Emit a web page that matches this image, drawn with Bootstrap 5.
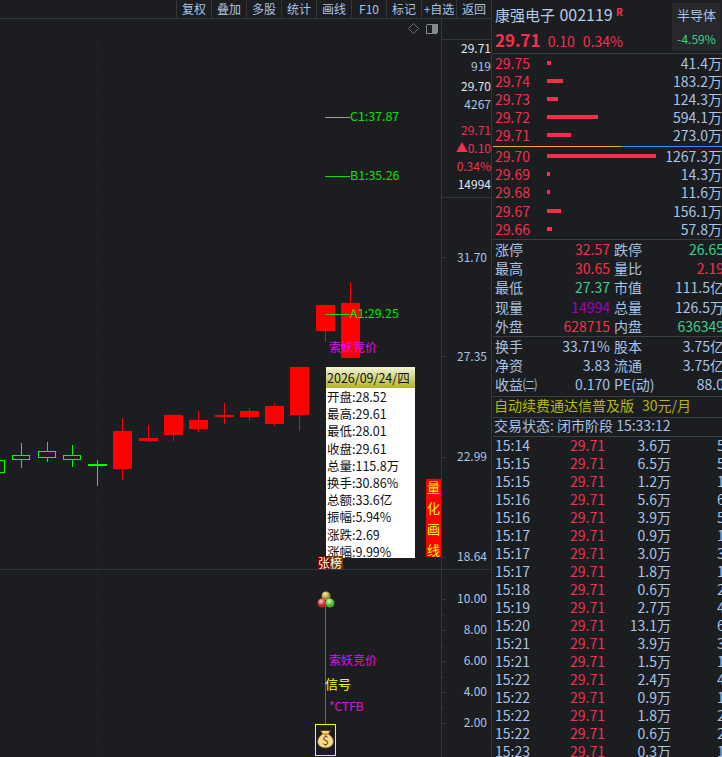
<!DOCTYPE html>
<html lang="zh-CN">

<head>
    <meta charset="UTF-8">
    <title>康强电子 002119</title>
    <link href="https://cdn.jsdelivr.net/npm/bootstrap@5.3.0/dist/css/bootstrap.min.css" rel="stylesheet">
    <style>
        html, body { height: 100%; overflow: hidden; background: #1b1d21; }
        body { font-family: "Noto Sans CJK SC", "Liberation Sans", sans-serif; font-size: 14px; color: #a9c4e4; }
        .app { width: 722px; height: 757px; }
        .chart-side { width: 492px; flex: none; border-right: 1px solid #33363b; }
        .quote-side { width: 230px; flex: none; }

        .toolbar { height: 19px; border-bottom: 1px solid #33363b; position: relative; z-index: 2; }
        .tool-btn { width: 35px; height: 18px; padding: 0; border: 0; border-left: 1px solid #33363b; border-radius: 0; font-size: 12px; line-height: 16px; color: #a9c4e4; background: none; white-space: nowrap; overflow: hidden; }

        .chart-svg { position: absolute; left: 0; top: 0; width: 491px; height: 757px; shape-rendering: crispEdges; }
        .chart-svg text { font-family: "Noto Sans CJK SC", "Liberation Sans", sans-serif; font-size: 12px; shape-rendering: auto; }
        .ax { fill: #a9c4e4; text-anchor: end; }
        .ax-w { fill: #e2e8f0; text-anchor: end; }
        .ax-r { fill: #f5304e; text-anchor: end; }
        .chart-svg .lbl-g { fill: #00e800; font-size: 12.4px; }
        .lbl-m { fill: #e010e8; }
        .chart-svg .lbl-y { fill: #ffff00; font-size: 13px; }

        .kline-tip { position: absolute; left: 326px; top: 367px; width: 89px; height: 191px; background: #fff; color: #111; font-size: 12.5px; overflow: hidden; }
        .kline-tip-head { height: 21px; line-height: 21px; padding-left: 1px; background: linear-gradient(#f4f4d8, #b3b32a); white-space: nowrap; }
        .kline-tip-row { height: 17.2px; line-height: 17.2px; padding-left: 1px; white-space: nowrap; }
        .kline-tip-row:first-of-type { margin-top: 2px; }
        .draw-tag { position: absolute; left: 426px; top: 479px; width: 15px; height: 78px; background: #ff0000; color: #ffff00; font-size: 13px; line-height: 21px; text-align: center; }
        .rank-tag { position: absolute; left: 318px; top: 556px; height: 13px; font-size: 12px; line-height: 13px; color: #fff; z-index: 3; }
        .rank-a { background: #7a0000; width: 12px; overflow: hidden; }
        .rank-b { background: #7a3c00; width: 13px; overflow: hidden; }

        .stock-head { height: 53px; }
        .stock-name { font-size: 15px; line-height: 20px; padding: 2px 0 0 3px; color: #b6cbe6; white-space: nowrap; }
        .stock-code { font-size: 16px; margin-left: 1px; }
        .stock-flag { color: #f5304e; font-size: 10px; font-weight: 700; vertical-align: 5px; }
        .stock-price { line-height: 22px; padding: 4px 0 0 3px; white-space: nowrap; color: #f5304e; }
        .stock-price b { font-size: 17px; margin-right: 7px; }
        .stock-price span { margin-right: 8px; }
        .sector-box { width: 49px; height: 48px; margin: 3px 1px 0 0; background: #26282c; text-align: center; line-height: 24px; font-size: 13px; white-space: nowrap; }
        .sector-box div + div { font-size: 12px; color: #3bd08f; }

        .divider { height: 1px; background: #3a3d42; margin-left: 1px; }
        .divider-split { height: 1px; margin-left: 1px; background: linear-gradient(90deg, #f0a22e 0 128px, #3f8fe0 128px); }

        .order-list { padding: 0 0 0 3px; }
        .order-asks { height: 92px; }
        .order-asks .order-row { height: 18.1px; line-height: 18.1px; }
        .order-bids { height: 92px; }
        .order-row { height: 18.2px; line-height: 18.2px; white-space: nowrap; }
        .order-price { width: 52px; flex: none; color: #f5304e; }
        .order-bar { height: 4px; background: #fb2d4c; }
        .order-vol { margin-left: auto; }

        .stat-block-b { padding-bottom: 1px; }
        .stat-row { height: 19.2px; line-height: 18.8px; padding-left: 3px; white-space: nowrap; }
        .stat-key { width: 36px; flex: none; }
        .stat-val { width: 81px; flex: none; text-align: right; padding-right: 2px; }
        .stat-key2 { width: 42px; flex: none; margin-left: 2px; }
        .stat-val2 { width: 68px; flex: none; text-align: right; }
        .up { color: #f5304e; }
        .down { color: #3bd08f; }
        .vol { color: #a800b8; }

        .ad-row { height: 20px; line-height: 17px; padding-left: 2px; color: #b8b800; white-space: nowrap; }
        .ad-row span { margin-left: 8px; }
        .state-row { height: 18px; line-height: 15px; padding-left: 2px; white-space: nowrap; }

        .trade-row { height: 18px; line-height: 16px; padding-left: 3px; white-space: nowrap; }
        .trade-time { width: 60px; flex: none; }
        .trade-price { width: 50px; flex: none; text-align: right; color: #f5304e; }
        .trade-vol { width: 66px; flex: none; text-align: right; }
        .trade-count { margin-left: 46px; }
    </style>
</head>

<body>
    <div class="app d-flex">
        <div class="chart-side position-relative">
            <div class="toolbar d-flex justify-content-end">
                <button class="btn tool-btn">复权</button>
                <button class="btn tool-btn">叠加</button>
                <button class="btn tool-btn">多股</button>
                <button class="btn tool-btn">统计</button>
                <button class="btn tool-btn">画线</button>
                <button class="btn tool-btn">F10</button>
                <button class="btn tool-btn">标记</button>
                <button class="btn tool-btn">+自选</button>
                <button class="btn tool-btn">返回</button>
            </div>

            <svg class="chart-svg" id="chart" viewBox="0 0 491 757">
                <g id="grid"></g>
                <g id="candles"></g>

                <!-- corner icons -->
                <path d="M413.5 23.5l5 5-5 5-5-5z" fill="none" stroke="#6b6e73" shape-rendering="auto"/>
                <rect x="426.5" y="24.5" width="11" height="9" rx="1.5" fill="none" stroke="#85888d"/>
                <rect x="432" y="25" width="5" height="8" fill="#85888d"/>

                <!-- level lines -->
                <line x1="325" y1="117.5" x2="350" y2="117.5" stroke="#9a9f98"/>
                <line x1="325" y1="176.5" x2="350" y2="176.5" stroke="#00e800"/>
                <line x1="325" y1="314.5" x2="350" y2="314.5" stroke="#00e800"/>
                <text class="lbl-g" x="350" y="121">C1:37.87</text>
                <text class="lbl-g" x="350" y="180">B1:35.26</text>
                <text class="lbl-g" x="350" y="318">A1:29.25</text>
                <text class="lbl-m" x="329" y="352">索妖竞价</text>

                <!-- axis, upper -->
                <text class="ax-w" x="491" y="53">29.71</text>
                <text class="ax" x="491" y="71">919</text>
                <text class="ax-w" x="491" y="91">29.70</text>
                <text class="ax" x="491" y="109">4267</text>
                <text class="ax-r" x="491" y="135">29.71</text>
                <text class="ax-r" x="491" y="153">▲0.10</text>
                <text class="ax-r" x="491" y="171">0.34%</text>
                <text class="ax-w" x="491" y="189">14994</text>
                <text class="ax" x="487" y="262">31.70</text>
                <text class="ax" x="487" y="361">27.35</text>
                <text class="ax" x="487" y="461">22.99</text>
                <text class="ax" x="487" y="561">18.64</text>

                <!-- axis, lower -->
                <text class="ax" x="487" y="603">10.00</text>
                <text class="ax" x="487" y="634">8.00</text>
                <text class="ax" x="487" y="665">6.00</text>
                <text class="ax" x="487" y="696">4.00</text>
                <text class="ax" x="487" y="727">2.00</text>

                <!-- signal column -->
                <line x1="325.5" y1="605" x2="325.5" y2="724" stroke="#e010e8"/>
                <g shape-rendering="auto">
                    <defs>
                        <radialGradient id="ballY" cx=".4" cy=".3"><stop offset="0" stop-color="#f4eec0"/><stop offset="1" stop-color="#a8861c"/></radialGradient>
                        <radialGradient id="ballR" cx=".4" cy=".3"><stop offset="0" stop-color="#f7c8c0"/><stop offset="1" stop-color="#c0201c"/></radialGradient>
                        <radialGradient id="ballG" cx=".4" cy=".3"><stop offset="0" stop-color="#dcf7c8"/><stop offset="1" stop-color="#44b020"/></radialGradient>
                    </defs>
                    <circle cx="326" cy="596" r="4.5" fill="url(#ballY)"/>
                    <circle cx="322" cy="603" r="4.5" fill="url(#ballR)"/>
                    <circle cx="330" cy="603" r="4.5" fill="url(#ballG)"/>
                </g>
                <text class="lbl-m" x="329" y="665">索妖竞价</text>
                <text class="lbl-y" x="325" y="689">信号</text>
                <text class="lbl-m" x="329" y="711">*CTFB</text>
                <rect x="315.5" y="724.5" width="20" height="31" fill="none" stroke="#ffff00"/>
                <g shape-rendering="auto">
                    <path d="M322.500 734l-2-3.500h10l-2 3.500c3 2 5 4.500 5 7.500 0 4-3.500 6.500-8 6.500s-8-2.500-8-6.500c0-3 2-5.500 5-7.500z" fill="#f6dc8c" stroke="#6a3c10"/>
                    <path d="M322.500 734h6" stroke="#c8901c" stroke-width="1.500"/>
                    <text x="325.500" y="745" text-anchor="middle" fill="#7a4a14">$</text>
                </g>
            </svg>

            <div class="kline-tip">
                <div class="kline-tip-head">2026/09/24/四</div>
                <div class="kline-tip-row">开盘:28.52</div>
                <div class="kline-tip-row">最高:29.61</div>
                <div class="kline-tip-row">最低:28.01</div>
                <div class="kline-tip-row">收盘:29.61</div>
                <div class="kline-tip-row">总量:115.8万</div>
                <div class="kline-tip-row">换手:30.86%</div>
                <div class="kline-tip-row">总额:33.6亿</div>
                <div class="kline-tip-row">振幅:5.94%</div>
                <div class="kline-tip-row">涨跌:2.69</div>
                <div class="kline-tip-row">涨幅:9.99%</div>
            </div>
            <div class="draw-tag d-flex flex-column justify-content-center">
                <div>量</div><div>化</div><div>画</div><div>线</div>
            </div>
            <div class="rank-tag d-flex"><div class="rank-a">张</div><div class="rank-b">榜</div></div>
        </div>

        <div class="quote-side">
            <div class="stock-head d-flex justify-content-between">
                <div>
                    <div class="stock-name">康强电子 <span class="stock-code">002119</span> <span class="stock-flag">R</span></div>
                    <div class="stock-price"><b>29.71</b><span>0.10</span><span>0.34%</span></div>
                </div>
                <div class="sector-box">
                    <div>半导体</div>
                    <div>-4.59%</div>
                </div>
            </div>
            <div class="divider"></div>
            <div class="order-list order-asks" id="asks"></div>
            <div class="divider-split"></div>
            <div class="order-list order-bids" id="bids"></div>
            <div class="divider"></div>
            <div id="stats1"></div>
            <div class="divider"></div>
            <div class="stat-block-b" id="stats2"></div>
            <div class="divider"></div>
            <div class="ad-row">自动续费通达信普及版<span>30元/月</span></div>
            <div class="divider"></div>
            <div class="state-row">交易状态: 闭市阶段 15:33:12</div>
            <div class="divider"></div>
            <div id="trades"></div>
        </div>
    </div>

    <script src="https://cdn.jsdelivr.net/npm/bootstrap@5.3.0/dist/js/bootstrap.bundle.min.js"></script>
    <script>
        const SVG_NS = "http://www.w3.org/2000/svg";

        function svgEl(parent, tag, attrs) {
            const el = document.createElementNS(SVG_NS, tag);
            for (const k in attrs) el.setAttribute(k, attrs[k]);
            parent.appendChild(el);
            return el;
        }

        // grid lines and ticks
        const grid = document.getElementById("grid");
        const line = "#33363b";
        svgEl(grid, "rect", { x: 441, y: 19, width: 1, height: 738, fill: line });
        svgEl(grid, "rect", { x: 441, y: 39, width: 50, height: 1, fill: line });
        svgEl(grid, "rect", { x: 441, y: 197, width: 50, height: 1, fill: line });
        svgEl(grid, "rect", { x: 0, y: 569, width: 491, height: 1, fill: line });
        [257, 356, 457, 557, 599, 630, 661, 692, 723].forEach(y => {
            svgEl(grid, "rect", { x: 441, y: y, width: 5, height: 1, fill: line });
        });
        [615, 646, 677, 708].forEach(y => {
            svgEl(grid, "rect", { x: 441, y: y, width: 3, height: 1, fill: line });
        });
        svgEl(grid, "line", { x1: 97.5, y1: 40, x2: 97.5, y2: 757, stroke: "#303338", "stroke-dasharray": "1 5" });

        // candles: left, width, body top, body bottom, wick top, wick bottom, type
        const candles = [
            [-10, 15, 460, 473, 460, 473, "g"],
            [12, 18, 455, 460, 443, 468, "g"],
            [38, 18, 451, 458, 442, 462, "g"],
            [63, 18, 455, 460, 445, 467, "g"],
            [88, 19, 464, 466, 460, 486, "f"],
            [113, 19, 431, 469, 418, 480, "r"],
            [139, 19, 438, 441, 425, 441, "r"],
            [164, 19, 415, 435, 414, 441, "r"],
            [189, 19, 420, 429, 411, 432, "r"],
            [215, 19, 415, 417, 403, 424, "r"],
            [240, 19, 411, 417, 408, 421, "r"],
            [265, 19, 406, 424, 403, 426, "r"],
            [290, 19, 367, 415, 367, 431, "r"],
            [316, 19, 305, 331, 305, 342, "r"],
            [341, 19, 303, 358, 282, 358, "r"]
        ];
        const candleBox = document.getElementById("candles");
        candles.forEach(([x, w, top, bottom, wickTop, wickBottom, type]) => {
            const color = type === "r" ? "#ff0000" : "#00ff00";
            const mid = x + Math.floor(w / 2);
            svgEl(candleBox, "rect", { x: mid, y: wickTop, width: 1, height: wickBottom - wickTop, fill: color });
            if (type === "g") {
                svgEl(candleBox, "rect", { x: x + .5, y: top + .5, width: w - 1, height: bottom - top - 1, fill: "#1b1d21", stroke: color });
            } else {
                svgEl(candleBox, "rect", { x: x, y: top, width: w, height: bottom - top, fill: color });
            }
        });

        // order book
        function orderRows(rows) {
            return rows.map(([price, bar, vol]) =>
                `<div class="order-row d-flex align-items-center">
                    <div class="order-price">${price}</div>
                    <div class="order-bar" style="width:${bar}px"></div>
                    <div class="order-vol">${vol}万</div>
                </div>`).join("");
        }
        document.getElementById("asks").innerHTML = orderRows([
            ["29.75", 4, "41.4"], ["29.74", 16, "183.2"], ["29.73", 11, "124.3"],
            ["29.72", 51, "594.1"], ["29.71", 24, "273.0"]
        ]);
        document.getElementById("bids").innerHTML = orderRows([
            ["29.70", 109, "1267.3"], ["29.69", 3, "14.3"], ["29.68", 3, "11.6"],
            ["29.67", 14, "156.1"], ["29.66", 5, "57.8"]
        ]);

        // stats blocks
        function statRows(rows) {
            return rows.map(([k1, v1, c1, k2, v2, c2]) =>
                `<div class="stat-row d-flex">
                    <div class="stat-key">${k1}</div>
                    <div class="stat-val ${c1}">${v1}</div>
                    <div class="stat-key2">${k2}</div>
                    <div class="stat-val2 ${c2}">${v2}</div>
                </div>`).join("");
        }
        document.getElementById("stats1").innerHTML = statRows([
            ["涨停", "32.57", "up", "跌停", "26.65", "down"],
            ["最高", "30.65", "up", "量比", "2.19", "up"],
            ["最低", "27.37", "down", "市值", "111.5亿", ""],
            ["现量", "14994", "vol", "总量", "126.5万", ""],
            ["外盘", "628715", "up", "内盘", "636349", "down"]
        ]);
        document.getElementById("stats2").innerHTML = statRows([
            ["换手", "33.71%", "", "股本", "3.75亿", ""],
            ["净资", "3.83", "", "流通", "3.75亿", ""],
            ["收益㈡", "0.170", "", "PE(动)", "88.0", ""]
        ]);

        // tick list
        const trades = [
            ["15:14", "3.6", 5], ["15:15", "6.5", 5], ["15:15", "1.2", 1], ["15:16", "5.6", 6],
            ["15:16", "3.9", 5], ["15:17", "0.9", 1], ["15:17", "3.0", 3], ["15:17", "1.8", 1],
            ["15:18", "0.6", 2], ["15:19", "2.7", 4], ["15:20", "13.1", 6], ["15:21", "3.9", 3],
            ["15:21", "1.5", 1], ["15:22", "2.4", 4], ["15:22", "0.9", 1], ["15:22", "1.8", 2],
            ["15:22", "0.6", 2], ["15:23", "0.3", 1]
        ];
        document.getElementById("trades").innerHTML = trades.map(([time, vol, count]) =>
            `<div class="trade-row d-flex">
                <div class="trade-time">${time}</div>
                <div class="trade-price">29.71</div>
                <div class="trade-vol">${vol}万</div>
                <div class="trade-count">${count}</div>
            </div>`).join("");
    </script>
</body>

</html>
